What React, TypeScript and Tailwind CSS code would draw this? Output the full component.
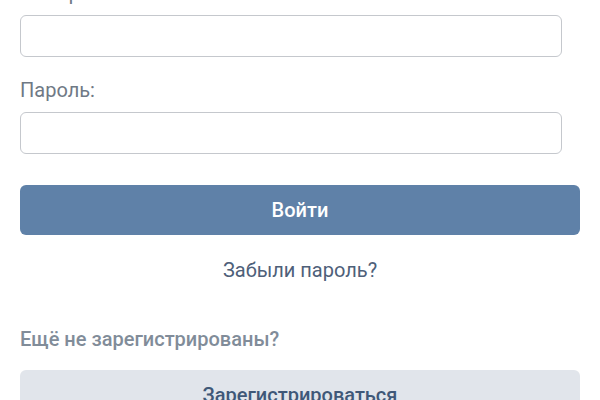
export default function App() {
  return (
    <div
      className="w-[600px] h-[400px] overflow-hidden bg-white px-5"
      style={{ fontFamily: "Roboto, 'Noto Sans', sans-serif" }}
    >
      <div className="-mt-[19px] flex flex-col">
        <label className="h-6 text-[20px] leading-6 text-[#6f7985]">Телефон или email:</label>
        <input
          type="text"
          className="mt-[10px] h-[42px] w-[542px] rounded-md border border-[#c5c8cd] bg-white px-3 outline-none"
        />
        <label className="mt-[21px] h-6 text-[20px] leading-6 text-[#6f7985]">Пароль:</label>
        <input
          type="password"
          className="mt-[10px] h-[42px] w-[542px] rounded-md border border-[#c5c8cd] bg-white px-3 outline-none"
        />
        <button
          type="button"
          className="mt-[31px] h-[50px] w-full rounded-md bg-[#5f81a8] text-[20px] font-medium text-white"
        >
          Войти
        </button>
        <div className="mt-[23px] h-6 text-center text-[20px] leading-6 text-[#4e6079]">Забыли пароль?</div>
        <div className="mt-[45px] h-6 text-[20px] font-medium leading-6 text-[#818c99]">
          Ещё не зарегистрированы?
        </div>
        <button
          type="button"
          className="mt-[19px] h-[50px] w-full rounded-md bg-[#e1e5eb] text-[20px] font-medium text-[#3f5878]"
        >
          Зарегистрироваться
        </button>
      </div>
    </div>
  );
}
